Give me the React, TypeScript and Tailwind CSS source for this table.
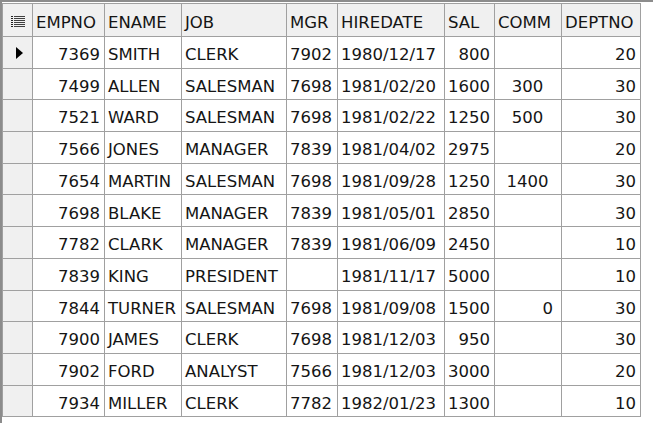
import React from "react";

type Emp = {
  empno: number;
  ename: string;
  job: string;
  mgr: string;
  hiredate: string;
  sal: number;
  comm: string;
  deptno: number;
};

const rows: Emp[] = [
  { empno: 7369, ename: "SMITH", job: "CLERK", mgr: "7902", hiredate: "1980/12/17", sal: 800, comm: "", deptno: 20 },
  { empno: 7499, ename: "ALLEN", job: "SALESMAN", mgr: "7698", hiredate: "1981/02/20", sal: 1600, comm: "300", deptno: 30 },
  { empno: 7521, ename: "WARD", job: "SALESMAN", mgr: "7698", hiredate: "1981/02/22", sal: 1250, comm: "500", deptno: 30 },
  { empno: 7566, ename: "JONES", job: "MANAGER", mgr: "7839", hiredate: "1981/04/02", sal: 2975, comm: "", deptno: 20 },
  { empno: 7654, ename: "MARTIN", job: "SALESMAN", mgr: "7698", hiredate: "1981/09/28", sal: 1250, comm: "1400", deptno: 30 },
  { empno: 7698, ename: "BLAKE", job: "MANAGER", mgr: "7839", hiredate: "1981/05/01", sal: 2850, comm: "", deptno: 30 },
  { empno: 7782, ename: "CLARK", job: "MANAGER", mgr: "7839", hiredate: "1981/06/09", sal: 2450, comm: "", deptno: 10 },
  { empno: 7839, ename: "KING", job: "PRESIDENT", mgr: "", hiredate: "1981/11/17", sal: 5000, comm: "", deptno: 10 },
  { empno: 7844, ename: "TURNER", job: "SALESMAN", mgr: "7698", hiredate: "1981/09/08", sal: 1500, comm: "0", deptno: 30 },
  { empno: 7900, ename: "JAMES", job: "CLERK", mgr: "7698", hiredate: "1981/12/03", sal: 950, comm: "", deptno: 30 },
  { empno: 7902, ename: "FORD", job: "ANALYST", mgr: "7566", hiredate: "1981/12/03", sal: 3000, comm: "", deptno: 20 },
  { empno: 7934, ename: "MILLER", job: "CLERK", mgr: "7782", hiredate: "1982/01/23", sal: 1300, comm: "", deptno: 10 },
];

// grid menu glyph in the corner cell
function ListIcon() {
  return (
    <svg width="14" height="11" viewBox="0 0 14 11" className="ml-[8px] mt-[3px]">
      {[0, 2, 4, 6, 8, 10].map((y) => (
        <rect key={y} x="3" y={y} width="11" height="1" fill="#404040" />
      ))}
      {[0, 2, 4, 6, 8, 10].map((y) => (
        <rect key={"s" + y} x="0" y={y} width="2" height="1" fill="#202020" />
      ))}
    </svg>
  );
}

const th = "border border-[#a0a0a0] bg-[#f0f0f0] pl-[3px] pr-[4px] pt-[6px] text-left font-normal";
const td = "border border-[#a0a0a0] bg-white pl-[3px] pr-[4px] pt-[6px] whitespace-nowrap";

export default function App() {
  return (
    <div className="w-[653px] h-[423px] bg-white overflow-hidden font-['DejaVu_Sans',sans-serif] text-[16.5px] leading-none text-[#151515] border-t-2 border-t-[#8c8c8c]">
      <div className="border-l-2 border-l-[#8c8c8c] h-full pt-[1px]">
        <table className="table-fixed border-collapse w-[638px]">
          <colgroup>
            <col className="w-[30px]" />
            <col className="w-[72px]" />
            <col className="w-[77px]" />
            <col className="w-[105px]" />
            <col className="w-[51px]" />
            <col className="w-[107px]" />
            <col className="w-[50px]" />
            <col className="w-[67px]" />
            <col className="w-[79px]" />
          </colgroup>
          <thead>
            <tr className="h-[33px]">
              <th className="border border-[#a0a0a0] bg-[#f0f0f0] p-0 align-middle">
                <ListIcon />
              </th>
              <th className={th}>EMPNO</th>
              <th className={th}>ENAME</th>
              <th className={th}>JOB</th>
              <th className={th}>MGR</th>
              <th className={th}>HIREDATE</th>
              <th className={th}>SAL</th>
              <th className={th}>COMM</th>
              <th className={th}>DEPTNO</th>
            </tr>
          </thead>
          <tbody>
            {rows.map((r, i) => (
              <tr key={r.empno} className="h-[31.7px]">
                <td className="border border-[#a0a0a0] bg-[#f0f0f0] p-0 align-middle">
                  {i === 0 && (
                    <svg width="7" height="12" viewBox="0 0 7 12" className="ml-[13px] mt-[2px]">
                      <polygon points="0,0 7,6 0,12" fill="#000" />
                    </svg>
                  )}
                </td>
                <td className={td + " text-right"}>{r.empno}</td>
                <td className={td}>{r.ename}</td>
                <td className={td}>{r.job}</td>
                <td className={td}>{r.mgr}</td>
                <td className={td}>{r.hiredate}</td>
                <td className={td + " text-right"}>{r.sal}</td>
                <td className={td + (r.comm === "0" ? " text-right pr-[8px]" : " text-center")}>{r.comm}</td>
                <td className={td + " text-right"}>{r.deptno}</td>
              </tr>
            ))}
          </tbody>
        </table>
      </div>
    </div>
  );
}
